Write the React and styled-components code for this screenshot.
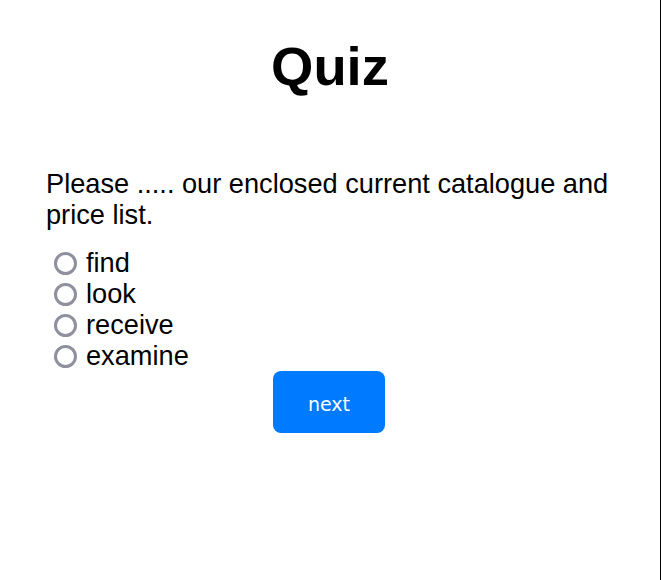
import React, { useState } from 'react';
import styled, { createGlobalStyle } from 'styled-components';

const GlobalStyle = createGlobalStyle`
	html, body {
		margin: 0;
		padding: 0;
		background: #fff;
	}
	body {
		font-family: "Liberation Sans", Arial, sans-serif;
	}
`;

const Page = styled.div`
	width: 660px;
	min-height: 580px;
	border-right: 1px solid #000;
	font-size: 27.2px;
	color: #000;
`;

const Title = styled.h1`
	margin: 0;
	padding-top: 36px;
	font-size: 54.4px;
	font-weight: 700;
	text-align: center;
	line-height: 1.15;
`;

const QuizBody = styled.div`
	padding: 69px 44px 0 46px;
	display: flex;
	flex-direction: column;
`;

const Question = styled.p`
	margin: 0 0 17px 0;
	line-height: 1.15;
`;

const OptionList = styled.div`
	display: flex;
	flex-direction: column;
`;

const OptionLabel = styled.label`
	display: flex;
	align-items: center;
	gap: 9px;
	height: 31px;
	padding-left: 8px;
	cursor: pointer;
`;

const Radio = styled.input`
	appearance: none;
	margin: 2px 0 0 0;
	width: 23px;
	height: 23px;
	border: 3px solid #8f8f9d;
	border-radius: 50%;
	box-sizing: border-box;
	background: #fff;
	&:checked {
		border-color: #007bff;
		box-shadow: inset 0 0 0 3px #fff;
		background: #007bff;
	}
`;

const NextButton = styled.button`
	align-self: center;
	width: 112px;
	height: 62px;
	margin-left: -4px;
	border: none;
	border-radius: 8px;
	background: #007bff;
	color: #fff;
	font-family: "DejaVu Sans", sans-serif;
	font-size: 19px;
	padding-top: 4px;
	cursor: pointer;
`;

const options = ['find', 'look', 'receive', 'examine'];

const App = () => {
	const [picked, setPicked] = useState(null);
	return (
		<>
			<GlobalStyle />
			<Page>
				<Title>Quiz</Title>
				<QuizBody>
					<Question>Please ..... our enclosed current catalogue and price list.</Question>
					<OptionList>
						{options.map((opt) => (
							<OptionLabel key={opt}>
								<Radio
									type="radio"
									name="answer"
									checked={picked === opt}
									onChange={() => setPicked(opt)}
								/>
								{opt}
							</OptionLabel>
						))}
					</OptionList>
					<NextButton>next</NextButton>
				</QuizBody>
			</Page>
		</>
	);
};

export default App;
